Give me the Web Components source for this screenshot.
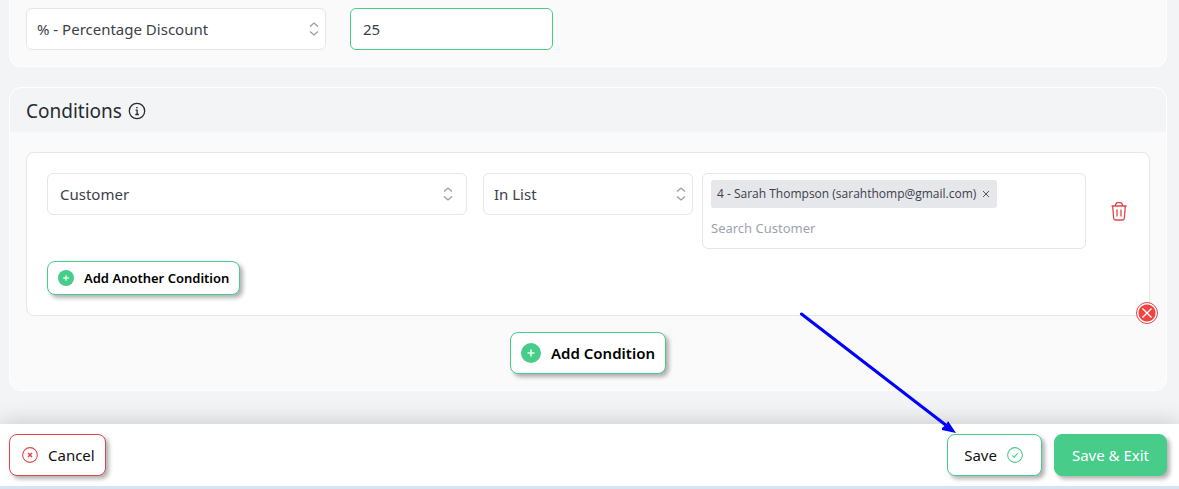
<!DOCTYPE html>
<html lang="en">
<head>
<meta charset="utf-8">
<title>Discount</title>
<style>
  html {
    --green: #48cc8a;
    --red: #e0454b;
    --line: #e4e6e9;
    background: #f3f4f6;
  }
  body {
    margin: 0;
    font-family: "Noto Sans", "Open Sans", sans-serif;
    font-size: 15px;
    line-height: 20px;
    color: #3b4149;
  }
</style>
</head>
<body>
<discount-page></discount-page>

<script>
const ICONS = {
  info: '<circle cx="10" cy="10" r="7.7"/><path d="M8.6 9.200h1.500v4.300M8.300 13.500h3.600"/><path d="M9.900 6v1.200" stroke-width="1.500"/>',
  sort: '<path d="M6 7.500L10 4l4 3.500M6 12.500l4 3.500 4-3.500"/>',
  plus: '<circle cx="10" cy="10" r="10" fill="currentColor" stroke="none"/><path d="M10 6.500v7M6.500 10h7" stroke="#d9ffe9" stroke-width="1.700"/>',
  cancel: '<circle cx="10" cy="10" r="9.200"/><path d="M7.500 7.500l5 5M12.500 7.500l-5 5" stroke-width="1.900"/>',
  check: '<circle cx="10" cy="10" r="9.200"/><path d="M6.600 10.400l2.300 2.300 4.400-5"/>',
  cross: '<path d="M2.500 2.500l15 15M17.500 2.500l-15 15" stroke-width="2.200"/>',
  trash: '<path d="M2.500 5h15M3.700 5l.9 12q.2 2 2 2h6.800q1.800 0 2-2l.9-12M6.300 5q.4-3.400 2.400-3.400h2.600q2 0 2.400 3.400M8 8.500v7M12 8.500v7"/>'
};

class AppIcon extends HTMLElement {
  constructor() {
    super();
    this.attachShadow( { mode: 'open' } );
  }

  connectedCallback() {
    this.shadowRoot.innerHTML = `
    <style>
      :host { display: inline-block; width: 16px; height: 16px; flex: none; }
      svg { display: block; width: 100%; height: 100%; overflow: visible; }
    </style>
    <svg viewBox="0 0 20 20" fill="none" stroke="currentColor" stroke-width="1.3" aria-hidden="true">${ICONS[ this.getAttribute( 'name' ) ]}</svg>
    `;
  }
}

class SelectField extends HTMLElement {
  constructor() {
    super();
    this.attachShadow( { mode: 'open' } );
  }

  connectedCallback() {
    this.shadowRoot.innerHTML = `
    <style>
      :host { display: grid; align-items: center; min-width: 0; }
      select, app-icon { grid-area: 1 / 1; }
      select {
        appearance: none;
        box-sizing: border-box;
        width: 100%;
        height: 42px;
        padding: 0 32px 0 var(--field-pad, 12px);
        border: 1px solid var(--line);
        border-radius: 6px;
        background: #fff;
        color: inherit;
        font: inherit;
      }
      app-icon {
        justify-self: end;
        width: 20px;
        height: 20px;
        margin-right: var(--icon-gap, 9px);
        color: #9a9da3;
        pointer-events: none;
      }
    </style>
    <select aria-label="${this.getAttribute( 'label' )}">
      <option>${this.getAttribute( 'value' )}</option>
    </select>
    <app-icon name="sort"></app-icon>
    `;
  }
}

class AmountField extends HTMLElement {
  constructor() {
    super();
    this.attachShadow( { mode: 'open' } );
  }

  connectedCallback() {
    this.shadowRoot.innerHTML = `
    <style>
      :host { display: block; min-width: 0; }
      input {
        box-sizing: border-box;
        width: 100%;
        height: 42px;
        padding: 0 12px;
        border: 1px solid var(--green);
        border-radius: 6px;
        background: #fff;
        color: inherit;
        font: inherit;
      }
    </style>
    <input type="text" inputmode="decimal" aria-label="${this.getAttribute( 'label' )}" value="${this.getAttribute( 'value' )}">
    `;
  }
}

class TagInput extends HTMLElement {
  constructor() {
    super();
    this.attachShadow( { mode: 'open' } );
  }

  connectedCallback() {
    this.shadowRoot.innerHTML = `
    <style>
      :host {
        display: flex;
        flex-direction: column;
        align-items: flex-start;
        gap: 4px;
        min-width: 0;
        padding: 6px 8px;
        border: 1px solid var(--line);
        border-radius: 6px;
        background: #fff;
      }
      .tag {
        display: flex;
        align-items: center;
        gap: 6px;
        height: 28px;
        padding: 0 7px 0 6px;
        border-radius: 3px;
        background: #e5e7eb;
        font-family: "Open Sans", sans-serif;
        font-size: 12px;
        white-space: nowrap;
      }
      .tag button {
        display: flex;
        padding: 0;
        border: 0;
        background: none;
        color: inherit;
      }
      .tag app-icon { width: 8px; height: 8px; }
      input {
        box-sizing: border-box;
        width: 100%;
        height: 30px;
        padding: 2px 0 0;
        border: 0;
        outline: 0;
        background: none;
        font: inherit;
        font-size: 13px;
      }
      input::placeholder { color: #9ca3af; opacity: 1; }
    </style>
    <span class="tag"><slot></slot><button type="button" aria-label="Remove"><app-icon name="cross"></app-icon></button></span>
    <input type="text" aria-label="Search Customer" placeholder="Search Customer">
    `;
  }
}

class AppButton extends HTMLElement {
  constructor() {
    super();
    this.attachShadow( { mode: 'open' } );
  }

  connectedCallback() {
    this.shadowRoot.innerHTML = `
    <style>
      :host { display: inline-block; }
      button {
        display: flex;
        align-items: center;
        justify-content: center;
        gap: 10px;
        box-sizing: border-box;
        height: 42px;
        padding: 0 10px 0 12px;
        border: 1px solid var(--green);
        border-radius: 8px;
        background: #fff;
        box-shadow: 3px 3px 4px rgba(0, 0, 0, .3);
        color: #111;
        font: inherit;
        white-space: nowrap;
      }
      :host([kind="danger"]) button { border-color: var(--red); }
      :host([kind="save"]) button { padding: 0 18px 0 16px; }
      :host([kind="primary"]) button { padding: 0 17px; background: var(--green); color: #fff; }
      :host([kind="add"]) button { padding: 0 10px; color: #000; font-weight: 600; }
      :host([kind="add"]) ::slotted(app-icon) { width: 20px; height: 20px; }
      :host([kind="add-small"]) button {
        height: 34px;
        padding: 0 10px;
        color: #000;
        font-size: 13px;
        font-weight: 600;
      }
      ::slotted(app-icon) { color: var(--green); }
      :host([kind="danger"]) ::slotted(app-icon) { color: var(--red); }
    </style>
    <button type="button"><slot></slot></button>
    `;
  }
}

class DiscountPanel extends HTMLElement {
  constructor() {
    super();
    this.attachShadow( { mode: 'open' } );
  }

  connectedCallback() {
    this.shadowRoot.innerHTML = `
    <style>
      :host {
        display: block;
        border: 1px solid #fff;
        border-radius: 12px;
        background: #fafafa;
      }
      :host([continued]) { border-top: 0; border-radius: 0 0 12px 12px; }
      header {
        display: flex;
        align-items: center;
        gap: 5px;
        box-sizing: border-box;
        height: 44px;
        padding: 2px 16px 0;
        border-radius: 12px 12px 0 0;
        background: #f3f4f6;
        color: #272c33;
      }
      h2 { margin: 0; font-size: 19px; font-weight: 400; line-height: 28px; }
      header app-icon { width: 20px; height: 20px; }
      :host([continued]) header { display: none; }
      .body { padding: 20px 16px 16px; }
      :host([continued]) .body { padding-top: 8px; }
    </style>
    <header><h2>${this.getAttribute( 'heading' ) || ''}</h2><app-icon name="info"></app-icon></header>
    <div class="body"><slot></slot></div>
    `;
  }
}

class ConditionGroup extends HTMLElement {
  constructor() {
    super();
    this.attachShadow( { mode: 'open' } );
  }

  connectedCallback() {
    this.shadowRoot.innerHTML = `
    <style>
      :host {
        display: block;
        position: relative;
        padding: 20px;
        border: 1px solid var(--line);
        border-radius: 8px;
        background: #fff;
      }
      .row {
        display: grid;
        grid-template-columns: 646fr 384fr auto;
        align-items: start;
        gap: 9px;
        margin-bottom: 12px;
      }
      .selects { display: grid; grid-template-columns: 2fr 1fr; gap: 16px; }
      .selects select-field:last-child { --field-pad: 10px; --icon-gap: 2px; }
      .delete {
        display: flex;
        align-self: center;
        margin-left: 14px;
        padding: 0;
        border: 0;
        background: none;
        color: var(--red);
      }
      .delete app-icon { width: 20px; height: 20px; }
      /* sits over the corner of the group */
      .remove {
        position: absolute;
        right: -9px;
        bottom: -9px;
        display: grid;
        place-items: center;
        box-sizing: border-box;
        width: 22px;
        height: 22px;
        padding: 0;
        border: 1px solid var(--red);
        border-radius: 50%;
        background: radial-gradient(circle, #ef4444 8px, #fff 9px);
        color: #fff;
      }
      .remove app-icon { width: 12px; height: 12px; }
    </style>
    <div class="row">
      <div class="selects">
        <select-field label="Condition" value="Customer"></select-field>
        <select-field label="Operator" value="In List"></select-field>
      </div>
      <tag-input>4 - Sarah Thompson (sarahthomp@gmail.com)</tag-input>
      <button class="delete" type="button" aria-label="Delete condition"><app-icon name="trash"></app-icon></button>
    </div>
    <app-button kind="add-small"><app-icon name="plus"></app-icon>Add Another Condition</app-button>
    <button class="remove" type="button" aria-label="Remove group"><app-icon name="cross"></app-icon></button>
    `;
  }
}

class PageFooter extends HTMLElement {
  constructor() {
    super();
    this.attachShadow( { mode: 'open' } );
  }

  connectedCallback() {
    this.shadowRoot.innerHTML = `
    <style>
      :host {
        display: flex;
        justify-content: space-between;
        padding: 10px 12px 10px 9px;
        border-bottom: 3px solid #d5e3f3;
        background: #fff;
        box-shadow: 0 0 24px rgba(0, 0, 0, .2);
      }
      .actions { display: flex; gap: 12px; }
      .save { position: relative; }
      /* pointer that ends on the Save button */
      .arrow {
        position: absolute;
        left: -147px;
        top: -124px;
        width: 160px;
        height: 126px;
        pointer-events: none;
      }
    </style>
    <app-button kind="danger"><app-icon name="cancel"></app-icon>Cancel</app-button>
    <div class="actions">
      <div class="save">
        <app-button kind="save">Save<app-icon name="check"></app-icon></app-button>
        <svg class="arrow" viewBox="0 0 160 126" aria-hidden="true">
          <path d="M1.500 4L147 116" stroke="#00f" stroke-width="3" stroke-linecap="round"/>
          <path d="M156 123L148 111 146 115 142 118 142 120Z" fill="#00f"/>
        </svg>
      </div>
      <app-button kind="primary">Save &amp; Exit</app-button>
    </div>
    `;
  }
}

class DiscountPage extends HTMLElement {
  constructor() {
    super();
    this.attachShadow( { mode: 'open' } );
  }

  connectedCallback() {
    this.shadowRoot.innerHTML = `
    <style>
      :host { display: flex; flex-direction: column; min-height: 100vh; overflow: hidden; }
      main { display: flex; flex-direction: column; gap: 20px; flex: 1; padding: 0 12px 33px 9px; }
      .discount { display: flex; gap: 24px; }
      .discount select-field { flex: 0 1 300px; --field-pad: 10px; --icon-gap: 2px; }
      .discount amount-field { flex: 0 1 203px; }
      .add { display: flex; justify-content: center; margin-top: 16px; }
    </style>
    <main>
      <discount-panel continued>
        <div class="discount">
          <select-field label="Discount type" value="% - Percentage Discount"></select-field>
          <amount-field label="Amount" value="25"></amount-field>
        </div>
      </discount-panel>
      <discount-panel heading="Conditions">
        <condition-group></condition-group>
        <div class="add">
          <app-button kind="add"><app-icon name="plus"></app-icon>Add Condition</app-button>
        </div>
      </discount-panel>
    </main>
    <page-footer></page-footer>
    `;
  }
}

customElements.define( 'app-icon', AppIcon );
customElements.define( 'select-field', SelectField );
customElements.define( 'amount-field', AmountField );
customElements.define( 'tag-input', TagInput );
customElements.define( 'app-button', AppButton );
customElements.define( 'discount-panel', DiscountPanel );
customElements.define( 'condition-group', ConditionGroup );
customElements.define( 'page-footer', PageFooter );
customElements.define( 'discount-page', DiscountPage );
</script>
</body>
</html>
